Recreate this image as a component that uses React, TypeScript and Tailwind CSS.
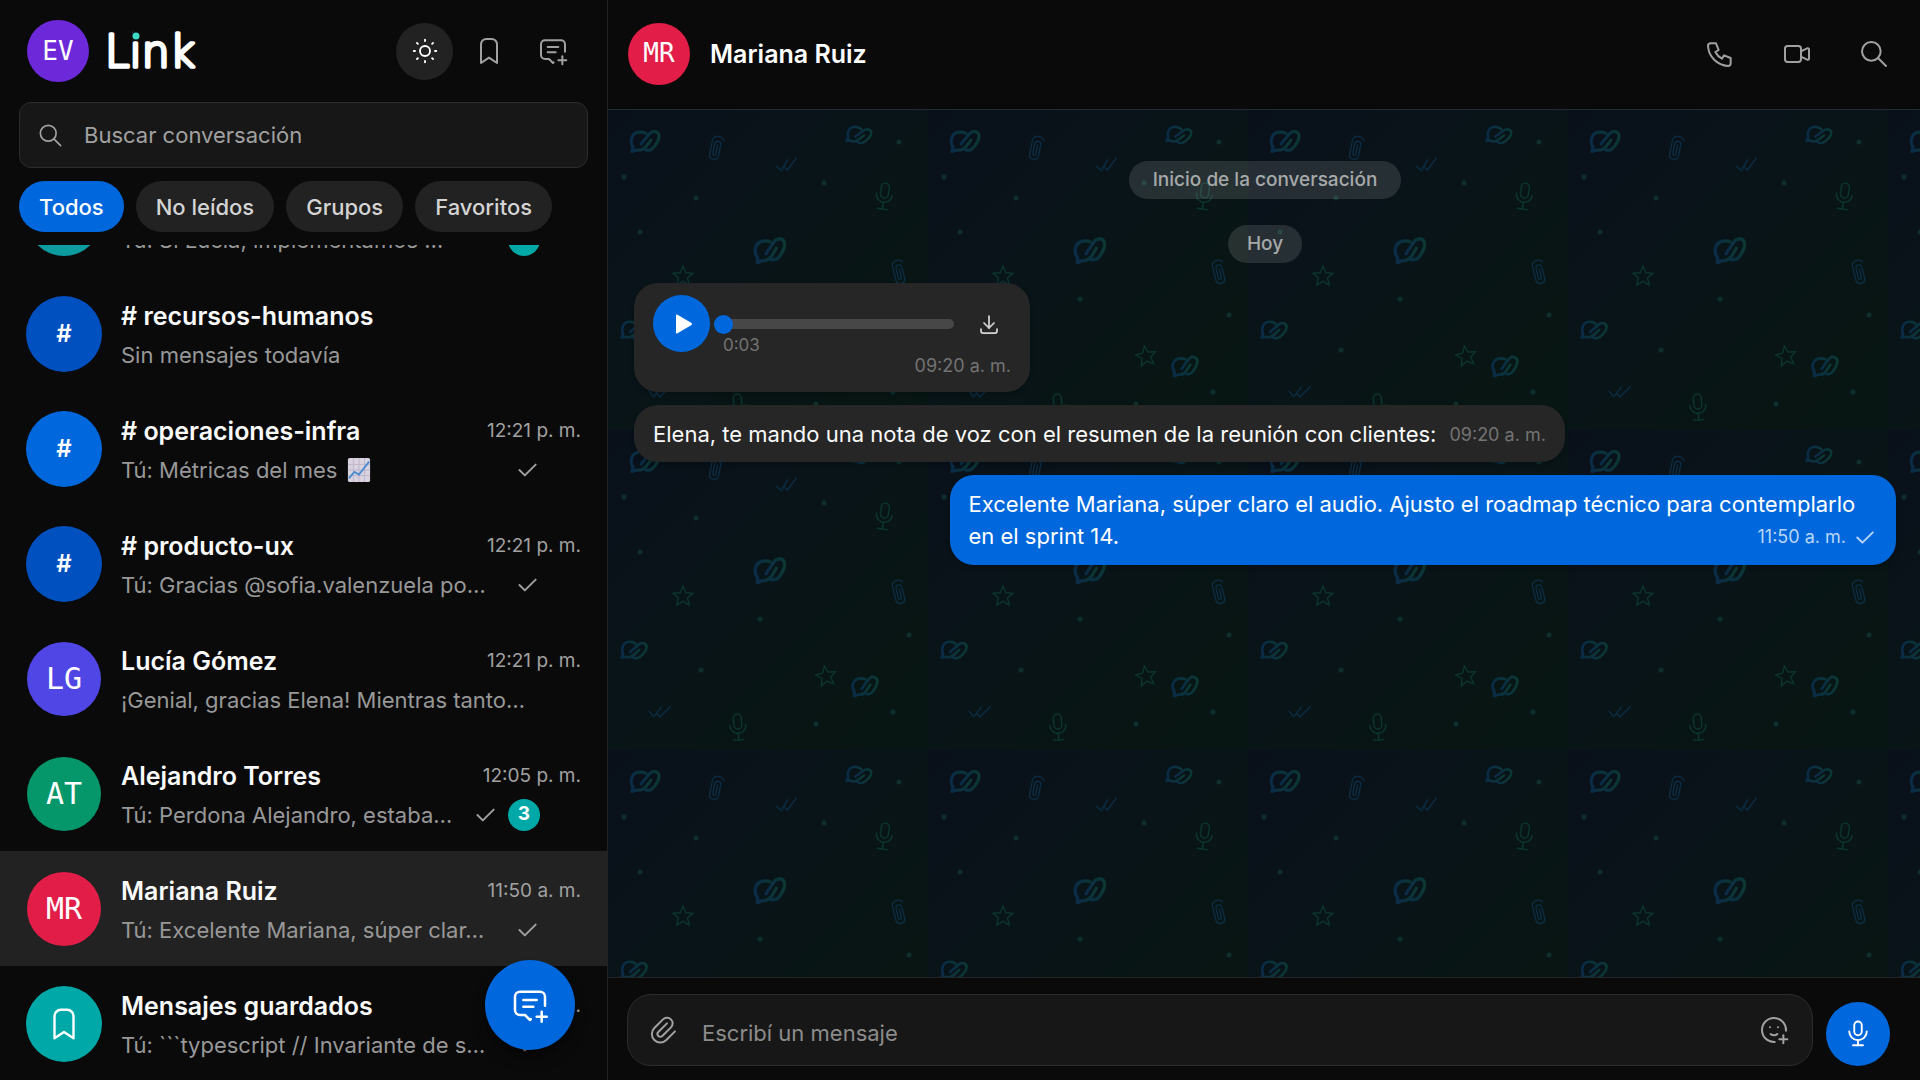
import { useLayoutEffect, useRef, useState } from "react";
import clsx from "clsx";
import {
  TbBookmark,
  TbCheck,
  TbDownload,
  TbMessage2Plus,
  TbMicrophone,
  TbMoodPlus,
  TbPaperclip,
  TbPhone,
  TbSearch,
  TbSun,
  TbVideo,
} from "react-icons/tb";

interface Conversation {
  id: string;
  name?: string;
  preview: string;
  time?: string;
  sent?: boolean;
  unread?: number;
  color: string;
  kind: "channel" | "person" | "saved";
  initials?: string;
  chart?: boolean;
}

const FILTERS = ["Todos", "No leídos", "Grupos", "Favoritos"];

const CONVERSATIONS: Conversation[] = [
  { id: "equipo", preview: "Tú: Sí Lucía, implementamos …", unread: 2, color: "bg-[#0d9ba0]", kind: "person" },
  { id: "rrhh", name: "# recursos-humanos", preview: "Sin mensajes todavía", color: "bg-[#0050c0]", kind: "channel" },
  { id: "infra", name: "# operaciones-infra", preview: "Tú: Métricas del mes", time: "12:21 p. m.", sent: true, color: "bg-[#0068dc]", kind: "channel", chart: true },
  { id: "ux", name: "# producto-ux", preview: "Tú: Gracias @sofia.valenzuela po…", time: "12:21 p. m.", sent: true, color: "bg-[#0050c0]", kind: "channel" },
  { id: "lucia", name: "Lucía Gómez", preview: "¡Genial, gracias Elena! Mientras tanto…", time: "12:21 p. m.", color: "bg-[#4f46e5]", kind: "person", initials: "LG" },
  { id: "alejandro", name: "Alejandro Torres", preview: "Tú: Perdona Alejandro, estaba…", time: "12:05 p. m.", sent: true, unread: 3, color: "bg-[#059669]", kind: "person", initials: "AT" },
  { id: "mariana", name: "Mariana Ruiz", preview: "Tú: Excelente Mariana, súper clar…", time: "11:50 a. m.", sent: true, color: "bg-[#e11d48]", kind: "person", initials: "MR" },
  { id: "saved", name: "Mensajes guardados", preview: "Tú: ```typescript // Invariante de s…", time: "11:30 a. m.", sent: true, color: "bg-[#00a8a8]", kind: "saved" },
];

function Logo() {
  return (
    <svg viewBox="0 0 94 44" className="h-11 w-[94px] overflow-visible" role="img" aria-label="Link">
      <text
        x="0"
        y="38"
        fill="white"
        stroke="white"
        strokeWidth="3.500"
        strokeLinejoin="round"
        className="font-['DejaVu_Sans',sans-serif] text-[44px] font-extralight"
      >
        Link
      </text>
      <ellipse cx="31" cy="6" rx="4" ry="5" fill="#0a0a0a" />
      <circle cx="31" cy="7" r="3.500" fill="#3fd9c8" />
    </svg>
  );
}

function ChartEmoji() {
  return (
    <svg viewBox="0 0 24 26" className="ml-2.5 h-6 w-6 shrink-0">
      <rect x="0" y="0" width="24" height="26" rx="2" fill="#d9d3e0" />
      <path d="M6 0v26M12 0v26M18 0v26M0 7h24M0 13h24M0 19h24" stroke="#bdb5c8" strokeWidth="1" />
      <path d="M1 22l6-7 5 3L23 4" fill="none" stroke="#4a8bd0" strokeWidth="2" />
    </svg>
  );
}

function Avatar({ conversation }: { conversation: Conversation }) {
  const { kind, initials, color } = conversation;
  return (
    <span
      className={clsx(
        "flex shrink-0 items-center justify-center rounded-full text-white",
        kind === "person" ? "mx-px size-[74px]" : "size-[76px]",
        color,
      )}
    >
      {kind === "person" && initials && (
        <span className="font-['DejaVu_Sans_Mono',monospace] text-[30px] leading-8">{initials}</span>
      )}
      {kind === "channel" && <span className="text-2xl font-semibold">#</span>}
      {kind === "saved" && <TbBookmark size={38} strokeWidth={1.5} />}
    </span>
  );
}

function ConversationRow({
  conversation,
  active,
  onSelect,
}: {
  conversation: Conversation;
  active: boolean;
  onSelect: () => void;
}) {
  const { name, preview, time, sent, unread, chart } = conversation;
  return (
    <li>
      <button
        type="button"
        onClick={onSelect}
        className={clsx(
          "flex h-[115px] w-full items-center gap-[19px] px-[26px] text-left",
          active && "bg-[#222222]",
        )}
      >
        <Avatar conversation={conversation} />
        <span className="flex min-w-0 flex-1 flex-col gap-1 pt-0.5">
          <span className="flex h-9 items-center justify-between">
            {name && <span className="truncate text-[25px] leading-9 font-semibold text-[#fafafa]">{name}</span>}
            {time && <span className="shrink-0 text-[19px] leading-9 text-[#a1a1a1]">{time}</span>}
          </span>
          <span className="flex h-[34px] items-center gap-2.5 pr-[41px]">
            <span className="flex min-w-0 flex-1 items-center text-[22px] leading-[34px] text-[#989898]">
              <span className="truncate">{preview}</span>
              {chart && <ChartEmoji />}
            </span>
            {sent && <TbCheck size={26} strokeWidth={1.75} className="shrink-0 text-[#a1a1a1]" />}
            {unread && (
              <span className="flex size-8 shrink-0 items-center justify-center rounded-full bg-[#00a8a8] text-[19px] font-bold text-white">
                {unread}
              </span>
            )}
          </span>
        </span>
      </button>
    </li>
  );
}

function Sidebar() {
  const [filter, setFilter] = useState("Todos");
  const [selected, setSelected] = useState("mariana");
  const listRef = useRef<HTMLUListElement>(null);

  useLayoutEffect(() => {
    if (listRef.current) listRef.current.scrollTop = 84;
  }, []);

  return (
    <aside className="relative flex w-[608px] shrink-0 flex-col border-r border-[#222222]">
      <header className="flex h-[102px] items-center pl-[27px] pr-[26px]">
        <span className="flex size-[62px] items-center justify-center rounded-full bg-[#6d28d9] font-['DejaVu_Sans_Mono',monospace] text-[26px] text-white">
          EV
        </span>
        <div className="ml-4 flex-1">
          <Logo />
        </div>
        <div className="flex gap-[7px] text-[#a1a1a1]">
          <button type="button" aria-label="Cambiar tema" className="flex size-[57px] items-center justify-center rounded-full bg-[#222222] text-white">
            <TbSun size={30} strokeWidth={1.5} />
          </button>
          <button type="button" aria-label="Mensajes guardados" className="flex size-[57px] items-center justify-center rounded-full">
            <TbBookmark size={32} strokeWidth={1.5} />
          </button>
          <button type="button" aria-label="Nueva conversación" className="flex size-[57px] items-center justify-center rounded-full">
            <TbMessage2Plus size={32} strokeWidth={1.5} />
          </button>
        </div>
      </header>

      <label className="mx-[19px] flex h-[66px] items-center gap-5 rounded-xl border border-[#2c2c2c] bg-[#171717] px-[17px] text-[#a1a1a1]">
        <TbSearch size={27} strokeWidth={1.5} className="shrink-0" />
        <input
          type="search"
          aria-label="Buscar conversación"
          placeholder="Buscar conversación"
          className="w-full bg-transparent text-[22px] outline-none placeholder:text-[#a1a1a1]"
        />
      </label>

      <div className="my-[13px] flex gap-3 px-[19px]">
        {FILTERS.map((name) => (
          <button
            key={name}
            type="button"
            onClick={() => setFilter(name)}
            className={clsx(
              "h-[51px] rounded-full px-5 pt-0.5 text-[22px] font-medium",
              filter === name ? "bg-[#0068dc] text-white" : "bg-[#222222] text-[#d4d4d4]",
            )}
          >
            {name}
          </button>
        ))}
      </div>

      <ul ref={listRef} className="min-h-0 flex-1 overflow-y-auto [scrollbar-width:none]">
        {CONVERSATIONS.map((conversation) => (
          <ConversationRow
            key={conversation.id}
            conversation={conversation}
            active={selected === conversation.id}
            onSelect={() => setSelected(conversation.id)}
          />
        ))}
      </ul>

      <button
        type="button"
        aria-label="Nuevo mensaje"
        className="absolute right-8 bottom-[30px] flex size-[90px] items-center justify-center rounded-full bg-[#0068dc] text-white shadow-lg shadow-black/40"
      >
        <TbMessage2Plus size={40} strokeWidth={1.5} />
      </button>
    </aside>
  );
}

const DOTS = [
  [291, 32], [16, 67], [88, 88], [216, 73], [32, 122], [152, 189], [301, 205],
  [93, 240], [285, 282], [208, 294],
];

function Wallpaper() {
  return (
    <svg className="absolute inset-0 h-full w-full" aria-hidden="true">
      <defs>
        <linearGradient id="tile" x1="0" y1="0" x2="1" y2="1">
          <stop offset="0" stopColor="#09101a" />
          <stop offset="0.4" stopColor="#091419" />
          <stop offset="0.7" stopColor="#081514" />
          <stop offset="1" stopColor="#081613" />
        </linearGradient>
        <linearGradient id="mark" x1="0" y1="0" x2="1" y2="0">
          <stop offset="0" stopColor="#0a2c48" />
          <stop offset="1" stopColor="#0c3834" />
        </linearGradient>
        <g id="link-mark" fill="none" stroke="url(#mark)" strokeWidth="3" strokeLinecap="round" strokeLinejoin="round">
          <path d="M1-7.500C-4-10-10-9-12.500-5C-14.500-1-14 3-12 6L-13 10.500L-8 9C-4 10-1 8 1 5.500L6-1" />
          <path d="M-4 3L4-6.500C8-11.500 14.500-9.500 14-4C13.500 0 11 3.500 8.500 6.500C6 9.500 2 10 0 8.500" />
        </g>
        <path id="star" d="M0-10L2.800-3.300L10-2.700L4.500 2L6.300 9L0 5.200L-6.300 9L-4.500 2L-10-2.700L-2.800-3.300Z" fill="none" strokeWidth="1.300" />
        <path id="checks" d="M-11 0L-6 5L1-5M-3 2L0 5L10-6" fill="none" strokeWidth="1.300" strokeLinecap="round" />
        <path id="clip" d="M6-9C4-13-5-13-5-7V7C-5 13 4 13 4 7V-4C4-8-2-8-2-4V6C-2 8 1 8 1 6V-3" fill="none" strokeWidth="1.300" strokeLinecap="round" />
        <g id="mic" fill="none" strokeWidth="1.400" strokeLinecap="round">
          <rect x="-4" y="-14" width="8" height="15" rx="4" />
          <path d="M-8-3C-8 8 8 8 8-3M0 6V12M-5 12H5" />
        </g>
        <pattern id="wallpaper" width="320" height="320" patternUnits="userSpaceOnUse">
          <rect width="320" height="320" fill="url(#tile)" />
          <use href="#link-mark" transform="translate(37 31)" />
          <use href="#link-mark" transform="translate(251 25) rotate(14) scale(.82)" />
          <use href="#link-mark" transform="translate(162 140) rotate(-6) scale(1.080)" />
          <use href="#link-mark" transform="translate(26 220) rotate(8) scale(.86)" />
          <use href="#link-mark" transform="translate(257 256) rotate(-4) scale(.9)" />
          <g stroke="#0a2c44">
            <use href="#clip" transform="translate(108 38) rotate(12)" />
            <use href="#clip" transform="translate(291 162) rotate(-14)" />
            <use href="#checks" transform="translate(179 55) rotate(-6)" />
            <use href="#checks" transform="translate(52 282) rotate(4)" />
          </g>
          <g stroke="#0b352f">
            <use href="#star" transform="translate(75 166)" />
            <use href="#star" transform="translate(218 246) rotate(-10)" />
            <use href="#mic" transform="translate(276 87) rotate(8)" />
            <use href="#mic" transform="translate(130 298) rotate(-4)" />
          </g>
          <g fill="#0e2f2e">
            {DOTS.map(([cx, cy]) => (
              <circle key={`${cx}-${cy}`} cx={cx} cy={cy} r="2.500" />
            ))}
          </g>
        </pattern>
      </defs>
      <rect width="100%" height="100%" fill="url(#wallpaper)" />
    </svg>
  );
}

function Pill({ children, wide }: { children: string; wide?: boolean }) {
  return (
    <span
      className={clsx(
        "flex h-[38px] items-center rounded-full bg-white/12 text-[19px] font-medium text-[#a6a9aa]",
        wide ? "px-6" : "px-[19px]",
      )}
    >
      {children}
    </span>
  );
}

function VoiceNote() {
  return (
    <div className="h-[109px] w-[396px] rounded-3xl bg-[#262626] px-[19px] pt-3 shadow-md">
      <div className="flex items-start">
        <button type="button" aria-label="Reproducir" className="flex size-[57px] shrink-0 items-center justify-center rounded-full bg-[#0068dc]">
          <svg viewBox="0 0 18 20" className="ml-1 h-5 w-[18px]" fill="white">
            <path d="M1 1.500Q1 0 2.500 .7L16.500 9Q17.500 10 16.500 11L2.500 19.300Q1 20 1 18.500Z" />
          </svg>
        </button>
        <div className="ml-3 flex flex-1 flex-col">
          <input
            type="range"
            aria-label="Posición del audio"
            min={0}
            max={100}
            defaultValue={0}
            className="mt-[18px] ml-[-8px] h-[22px] w-[240px] appearance-none bg-transparent [&::-webkit-slider-runnable-track]:h-2.5 [&::-webkit-slider-runnable-track]:rounded-full [&::-webkit-slider-runnable-track]:bg-[#474747] [&::-webkit-slider-thumb]:-mt-1 [&::-webkit-slider-thumb]:size-[19px] [&::-webkit-slider-thumb]:appearance-none [&::-webkit-slider-thumb]:rounded-full [&::-webkit-slider-thumb]:bg-[#0068dc]"
          />
          <span className="pl-px text-[17px] leading-5 text-[#737373]">0:03</span>
        </div>
        <button type="button" aria-label="Descargar" className="mt-[17px] mr-2.5 text-[#d4d4d4]">
          <TbDownload size={24} strokeWidth={1.75} />
        </button>
      </div>
      <div className="text-right text-[18px] leading-[22px] text-[#737373]">09:20 a. m.</div>
    </div>
  );
}

function Chat() {
  return (
    <main className="flex min-w-0 flex-1 flex-col">
      <header className="flex h-[110px] items-center border-b border-[#222c33] px-5 pb-0.5">
        <span className="flex size-[62px] items-center justify-center rounded-full bg-[#e11d48] font-['DejaVu_Sans_Mono',monospace] text-[26px] text-white">
          MR
        </span>
        <h1 className="ml-5 flex-1 pt-0.5 text-[25px] font-semibold text-white">Mariana Ruiz</h1>
        <div className="flex gap-[25px] text-[#a1a1a1]">
          <button type="button" aria-label="Llamar" className="flex size-[52px] items-center justify-center">
            <TbPhone size={32} strokeWidth={1.5} />
          </button>
          <button type="button" aria-label="Videollamada" className="flex size-[52px] items-center justify-center">
            <TbVideo size={32} strokeWidth={1.5} />
          </button>
          <button type="button" aria-label="Buscar" className="flex size-[52px] items-center justify-center">
            <TbSearch size={32} strokeWidth={1.5} />
          </button>
        </div>
      </header>

      <section className="relative min-h-0 flex-1 overflow-hidden">
        <Wallpaper />
        <div className="relative flex flex-col gap-[13px] pt-[51px] pr-6 pl-[26px]">
          <div className="mb-[7px] flex flex-col items-center gap-[26px]">
            <Pill wide>Inicio de la conversación</Pill>
            <Pill>Hoy</Pill>
          </div>
          <VoiceNote />
          <div className="flex items-end gap-[13px] self-start rounded-3xl bg-[#262626] px-[19px] pt-[13px] pb-3 shadow-md">
            <p className="text-[22px] leading-8 text-[#fafafa]">
              Elena, te mando una nota de voz con el resumen de la reunión con clientes:
            </p>
            <span className="shrink-0 text-[18px] leading-[30px] text-[#737373]">09:20 a. m.</span>
          </div>
          <div className="max-w-[75%] self-end rounded-3xl bg-[#0068dc] px-[19px] py-[13px] shadow-md">
            <p className="text-[22px] leading-8 text-white">
              Excelente Mariana, súper claro el audio. Ajusto el roadmap técnico para contemplarlo en el
              sprint 14.
              <span className="float-right flex h-8 items-center gap-1.5 pt-0.5 text-[18px] text-[#b9d6f7]">
                11:50 a. m.
                <TbCheck size={25} strokeWidth={1.75} />
              </span>
            </p>
          </div>
        </div>
      </section>

      <footer className="flex items-end gap-[13px] border-t border-[#262626] pt-4 pr-[30px] pb-3.5 pl-[19px]">
        <div className="flex h-[72px] flex-1 items-center rounded-3xl border border-[#2c2c2c] bg-[#171717] pr-[22px] pl-[19px] text-[#a1a1a1]">
          <button type="button" aria-label="Adjuntar archivo">
            <TbPaperclip size={32} strokeWidth={1.5} />
          </button>
          <input
            type="text"
            aria-label="Escribí un mensaje"
            placeholder="Escribí un mensaje"
            className="mx-[23px] mt-1.5 min-w-0 flex-1 bg-transparent text-[22px] outline-none placeholder:text-[#8c8c8c]"
          />
          <button type="button" aria-label="Emojis">
            <TbMoodPlus size={32} strokeWidth={1.5} />
          </button>
        </div>
        <button type="button" aria-label="Grabar audio" className="flex size-16 items-center justify-center rounded-full bg-[#0068dc] text-white">
          <TbMicrophone size={30} strokeWidth={1.5} />
        </button>
      </footer>
    </main>
  );
}

export default function App() {
  return (
    <div className="flex h-screen overflow-hidden bg-[#0a0a0a] font-['Inter',sans-serif]">
      <Sidebar />
      <Chat />
    </div>
  );
}
